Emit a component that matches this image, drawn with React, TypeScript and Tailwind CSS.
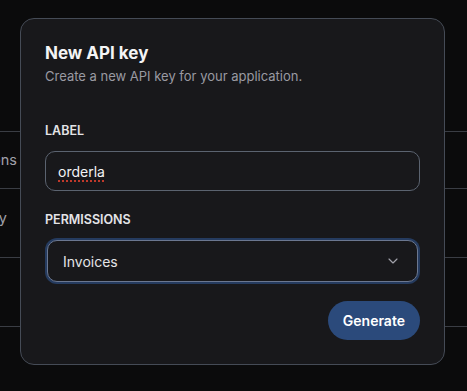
import { ChevronDown } from "lucide-react";

export default function App() {
  return (
    <div
      className="relative h-[391px] w-[467px] overflow-hidden bg-[#0b0b0c]"
      style={{ fontFamily: "Inter, 'Liberation Sans', sans-serif" }}
    >
      {/* table behind the dialog */}
      <div className="pt-[131px]">
        <div className="flex h-[57px] items-center border-t border-[#3a3d44]">
          <div className="flex w-[17px] justify-end overflow-hidden whitespace-nowrap text-[14.5px] text-[#a1a1aa]">
            Permissions
          </div>
        </div>
        <div className="flex h-[69px] items-center border-t border-[#3a3d44] pb-[10px]">
          <div className="flex w-[7px] justify-end overflow-hidden whitespace-nowrap text-[14.5px] text-[#a1a1aa]">
            Daily
          </div>
        </div>
        <div className="h-[69px] border-t border-[#3a3d44]" />
        <div className="h-[60px] border-t border-[#3a3d44]" />
      </div>

      {/* dialog */}
      <div className="absolute left-[20px] top-[18px] w-[425px] rounded-[14px] border border-[#454b56] bg-[#18181b] px-6 pb-6 pt-[22px]">
        <h2 className="text-[17px] font-bold leading-[24px] text-[#f4f4f5]">New API key</h2>
        <p className="mt-[2px] text-[13px] leading-[18px] text-[#9a9aa2]">
          Create a new API key for your application.
        </p>

        <label className="mt-[38px] block text-[12.5px] font-semibold leading-[16px] text-[#e4e4e7]">LABEL</label>
        <div className="mt-[12px] flex h-[40px] items-center rounded-[10px] border border-[#5b6370] px-[12px]">
          <span className="text-[14px] text-[#f4f4f5] underline decoration-[#c0392b] decoration-dotted decoration-2 underline-offset-[4px]">
            orderla
          </span>
        </div>

        <label className="mt-[21px] block text-[12.5px] font-semibold leading-[16px] text-[#e4e4e7]">
          PERMISSIONS
        </label>
        <div className="mt-[10px] rounded-[12px] bg-[#253b5f] p-[2px]">
          <div className="flex h-[42px] items-center justify-between rounded-[10px] border border-[#6b7790] bg-[#18181b] pl-[15px] pr-[16px]">
            <span className="text-[14px] text-[#e4e4e7]">Invoices</span>
            <ChevronDown className="h-4 w-4 text-[#a1a1aa]" strokeWidth={1.75} />
          </div>
        </div>

        <div className="mt-[17px] flex justify-end">
          <button className="h-[39px] rounded-full bg-[#2b4a7b] px-[15px] text-[14px] font-semibold text-white">
            Generate
          </button>
        </div>
      </div>
    </div>
  );
}
